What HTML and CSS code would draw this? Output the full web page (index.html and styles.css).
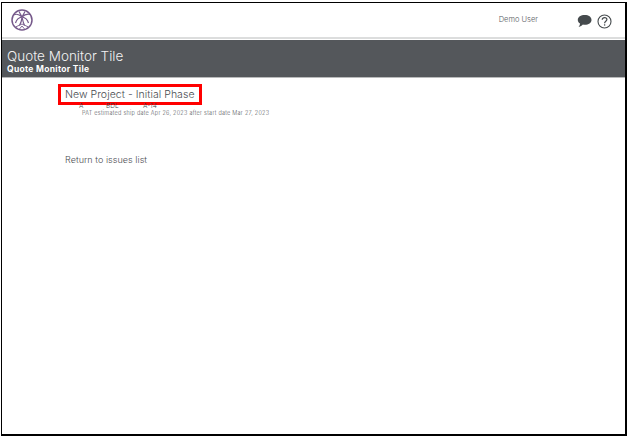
FILE: index.html
```html
<!DOCTYPE html>
<html lang="en">
<head>
<meta charset="utf-8">
<title>Quote Monitor Tile</title>
<link rel="stylesheet" href="styles.css">
</head>
<body>
<div class="frame">
  <header class="topbar">
    <svg class="logo" width="24" height="24" viewBox="0 0 24 24" fill="none" stroke="#75588a">
      <circle cx="12" cy="12" r="10" stroke-width="1.5"/>
      <path d="M12 9C9.5 6.5 6.5 5.5 3.5 7M12 9C14.5 6.5 17 5.5 20.5 6.5M12 9C9 9.5 6.5 11.5 5.5 15M12 9C15 9.5 17.5 11.5 18.5 15M12 9L9 3.5M12 9L15 3.5" stroke-width="1.2"/>
      <path d="M12 9C11.8 12 11 15 9.5 17.5M12 9C12.6 12 13.4 15 14.5 17.5" stroke-width="1.2"/>
      <path d="M5.5 19L12 16L18.5 19M9 21.5L12 18L15 21.5" stroke-width=".9"/>
    </svg>
    <div class="user">Demo User</div>
    <svg class="chat" width="15" height="14" viewBox="0 0 15 14">
      <path d="M7.8 1C11.6 1 14.5 3 14.5 5.9C14.5 8.8 11.6 10.8 7.8 10.8C7.1 10.8 6.5 10.7 5.9 10.6C5 11.7 3.4 12.7 1.6 13C2.5 12 3 10.9 3.1 9.6C1.6 8.7 .8 7.4 .8 5.9C.8 3 3.9 1 7.8 1Z" fill="#454a4d"/>
    </svg>
    <svg class="help" width="15" height="15" viewBox="0 0 15 15" fill="none" stroke="#454a4d">
      <circle cx="7.5" cy="7.5" r="6.5" stroke-width="1.1"/>
      <path d="M5.2 5.8C5.3 4.4 6.3 3.6 7.6 3.6C8.9 3.6 9.9 4.4 9.9 5.6C9.9 7.2 7.6 7.4 7.6 9.2" stroke-width="1.2"/>
      <path d="M7.6 10.3V11.6" stroke-width="1.3"/>
    </svg>
  </header>
  <section class="band">
    <h1 class="band-title">Quote Monitor Tile</h1>
    <div class="band-sub">Quote Monitor Tile</div>
  </section>
  <main class="content">
    <div class="highlight">New Project - Initial Phase</div>
    <div class="codes"><span class="code-a">A</span><span class="code-b">BDL</span><span>A-14</span></div>
    <div class="estimate">PAT estimated ship date Apr 26, 2023 after start date Mar 27, 2023</div>
    <a class="back" href="#">Return to issues list</a>
  </main>
</div>
</body>
</html>
```
FILE: styles.css
```css
* { box-sizing: border-box; }
html, body { margin: 0; height: 100%; background: #fff; overflow: hidden; }
body { padding: 2px 2px 3px 1px; font-family: "Inter", "Liberation Sans", sans-serif; font-weight: 300; color: #4a4d52; }
.frame { height: 434px; width: 626px; border: 1px solid #000; border-width: 1px 2px 2px 1px; display: flex; flex-direction: column; background: #fff; }
.topbar { height: 36px; flex: none; display: flex; align-items: center; padding-left: 8px; border-bottom: 2px solid #dcdddd; }
.logo { flex: none; }
.user { margin-left: auto; font-size: 7.5px; color: #55585c; margin-top: -2px; }
.chat { margin-left: 39px; flex: none; margin-top: 2px; }
.help { margin-left: 5px; margin-right: 13px; flex: none; margin-top: 3px; }
.band { height: 38px; margin-top: 1px; flex: none; background: #54575b; border-bottom: 1px solid #b9babb; padding: 8px 5px 0; color: #fff; }
.band-title { margin: 0; font-size: 13.5px; line-height: 16px; font-weight: 300; color: #f2f2f2; }
.band-sub { font-size: 8.5px; line-height: 10px; font-weight: 700; letter-spacing: .3px; }
.content { flex: 1; padding: 6px 0 0 56px; }
.highlight { width: 144px; height: 21px; border: 3px solid #f00; padding-left: 4px; font-size: 10.5px; line-height: 15px; white-space: nowrap; color: #4a4d52; letter-spacing: .05px; }
.codes { display: flex; font-size: 6.5px; line-height: 8px; padding-left: 21px; margin-top: -3px; height: 8px; color: #3c3f44; }
.code-a { width: 27px; }
.code-b { width: 37px; }
.estimate { font-size: 5.5px; line-height: 8px; padding-left: 24px; white-space: nowrap; color: #55585d; margin-top: -1px; letter-spacing: .26px; }
.back { display: block; margin: 37px 0 0 7px; font-size: 9px; line-height: 12px; color: #4a4d52; text-decoration: none; letter-spacing: .05px; }
```
